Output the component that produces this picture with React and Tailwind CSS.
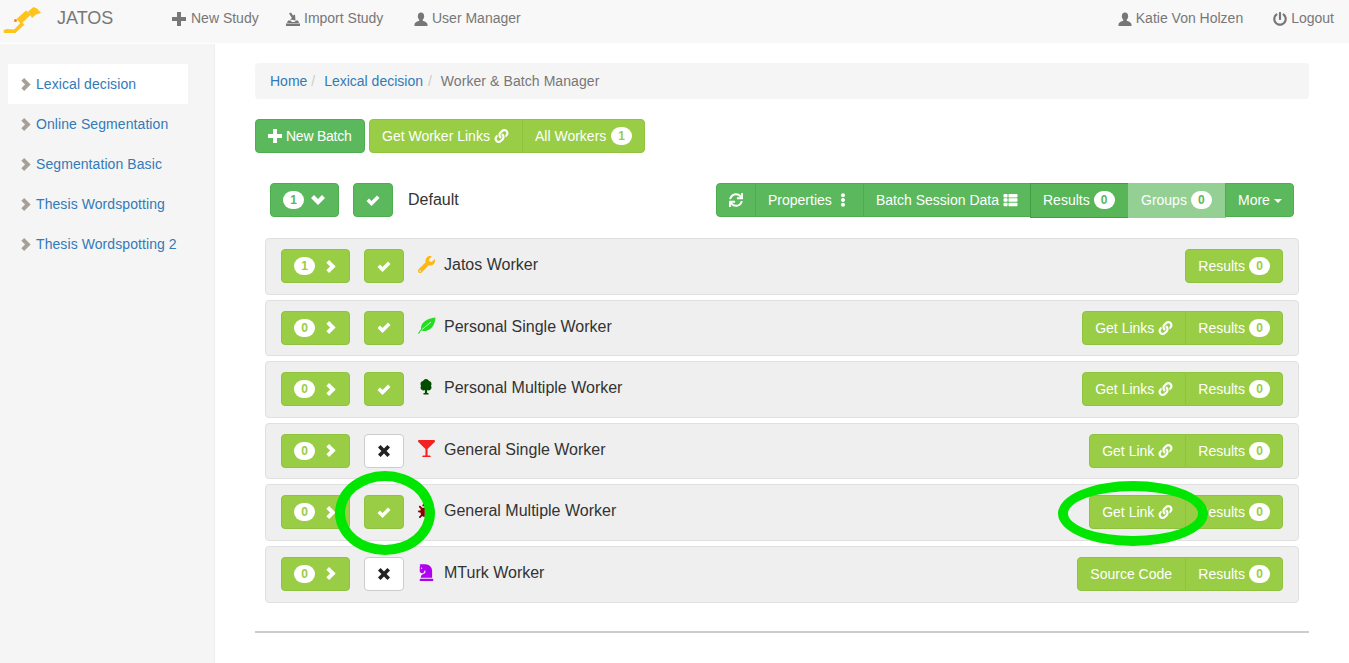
import { FaBug, FaChessKnight, FaEllipsisV, FaGlassMartini, FaLink, FaPowerOff, FaSync, FaThList, FaWrench } from 'react-icons/fa';

const Poly = ({ box, points, className }) => (
  <svg viewBox={box} className={className} fill="currentColor">
    <polygon points={points} />
  </svg>
);

const ChevronRight = ({ className }) => <Poly box="0 0 10 14" points="3,0 10,7 3,14 0,11 4,7 0,3" className={className} />;
const ChevronDown = ({ className }) => <Poly box="0 0 14 10" points="0,3 3,0 7,4 11,0 14,3 7,10" className={className} />;
const Check = ({ className }) => <Poly box="0 0 14 12" points="0.5,6.500 3,4 5.500,6.500 11,1 13.500,3.500 5.500,11.500" className={className} />;
const Cross = ({ className }) => <Poly box="0 0 14 14" points="3,0 7,4 11,0 14,3 10,7 14,11 11,14 7,10 3,14 0,11 4,7 0,3" className={className} />;
const Plus = ({ className }) => <Poly box="0 0 14 14" points="5,0 9,0 9,5 14,5 14,9 9,9 9,14 5,14 5,9 0,9 0,5 5,5" className={className} />;

const UserIcon = ({ className }) => (
  <svg viewBox="0 0 14 14" className={className} fill="currentColor">
    <path d="M7 .5c2 0 3.2 1.600 3.200 3.700 0 1.500-.7 2.800-1.400 3.400v1.200c1.300.6 4.700 1.400 4.700 3.700V14H.5v-1.500c0-2.300 3.400-3.100 4.700-3.700V7.600C4.500 7 3.800 5.700 3.800 4.200 3.800 2.100 5 .5 7 .5z" />
  </svg>
);

const ImportIcon = ({ className }) => (
  <svg viewBox="0 0 14 14" className={className} fill="currentColor">
    <path d="M0 11.500h14V14H0zM2 8.500h2.500l1.500 1.500h2.500L10 8.500h2l1 2.500H1z" />
    <path d="M3 1.500 5 .5 7 3.500 9 2.500 9.500 8.500 4 7.500 6 6z" />
  </svg>
);

const TreeIcon = ({ className }) => (
  <svg viewBox="0 0 14 16" className={className} fill="currentColor">
    <path d="M7 0c1.600 0 2.600 1 2.900 2.100C11.500 2.300 12.500 3.500 12.500 5c0 .8-.2 1.300-.6 1.800.4.500.6 1.100.6 1.700 0 1.700-1.400 2.900-3 2.900-.5 0-1-.1-1.400-.4V14h1.400v1.500H4.500V14h1.400v-2.900c-.4.300-.9.400-1.400.4-1.600 0-3-1.200-3-2.900 0-.6.200-1.200.6-1.700C1.700 6.300 1.500 5.800 1.500 5c0-1.500 1-2.700 2.600-2.900C4.400 1 5.400 0 7 0z" />
  </svg>
);

const LeafIcon = ({ className }) => (
  <svg viewBox="0 0 18 18" className={className}>
    <path fill="#22dd22" d="M17.500.5C17 7 14 13.500 7 14c-2 .1-3.200-.3-3.800-.7L1 17 0 16.300 3 12C2.500 5.500 9 1.500 17.500.5z" />
    <path stroke="#c8f7c8" strokeWidth="1" fill="none" d="M4 12.500 13 5" />
  </svg>
);

const Logo = () => (
  <svg viewBox="0 0 42 35" className="h-[35px] w-[42px] text-[#fdc41c]" fill="currentColor">
    <path d="M3.500 30 7 29 14 29.500 21.500 22 24.500 24.500 15.500 33 4 33z" />
    <path d="M16.500 19 26 10.500 31 14.500 21 24z" />
    <path d="M28 11.500 33.500 7 37 8.500 41 13 36 14.500 32 18z" />
    <circle cx="15.500" cy="20.500" r="1.500" fill="#f08030" />
  </svg>
);

const Badge = ({ children, tone }) => (
  <span className={`inline-flex h-[18px] min-w-[21px] items-center justify-center rounded-[10px] bg-white px-[7px] text-[12px] leading-none font-bold ${tone === 'lime' ? 'text-[#99cd46]' : 'text-[#5cb85c]'}`}>
    {children}
  </span>
);

const Btn = ({ tone = 'lime', className = '', children }) => {
  const tones = {
    lime: 'h-[34px] border-[#8fc33f] bg-[#99cd46] text-white',
    green: 'h-[34px] border-[#4cae4c] bg-[#5cb85c] text-white',
    active: 'h-[35px] pb-px border-[#449d44] bg-[#58b658] text-white',
    disabled: 'h-[35px] pb-px border-[#94d094] bg-[#94d094] text-white',
    white: 'h-[34px] border-[#ccc] bg-white text-[#333]',
  };
  return (
    <div className={`flex shrink-0 items-center gap-[4px] self-start rounded-[4px] border px-3 text-[14px] leading-5 whitespace-nowrap ${tones[tone]} ${className}`}>
      {children}
    </div>
  );
};

const Group = ({ items, tone = 'lime' }) => (
  <div className="flex">
    {items.map((item, i) => (
      <Btn
        key={i}
        tone={item.tone || tone}
        className={`${i > 0 ? '-ml-px rounded-l-none' : ''} ${i < items.length - 1 ? 'rounded-r-none' : ''} ${item.className || ''}`}
      >
        {item.content}
      </Btn>
    ))}
  </div>
);

const linkIcon = <FaLink className="h-[14px] w-[15px]" />;

const workers = [
  { name: 'Jatos Worker', count: 1, on: true, icon: <FaWrench className="h-[17px] w-[17px] text-[#fdb813]" />, action: null },
  { name: 'Personal Single Worker', count: 0, on: true, icon: <LeafIcon className="h-[18px] w-[18px]" />, action: 'Get Links' },
  { name: 'Personal Multiple Worker', count: 0, on: true, icon: <TreeIcon className="ml-px h-[16px] w-[14px] text-[#004d00]" />, action: 'Get Links' },
  { name: 'General Single Worker', count: 0, on: false, icon: <FaGlassMartini className="h-[17px] w-[17px] text-[#f52222]" />, action: 'Get Link' },
  { name: 'General Multiple Worker', count: 0, on: true, icon: <FaBug className="h-[15px] w-[15px] text-[#8b0000]" />, action: 'Get Link', marked: true },
  { name: 'MTurk Worker', count: 0, on: false, icon: <FaChessKnight className="h-[18px] w-[17px] text-[#b000f0]" />, action: 'Source Code' },
];

const Row = ({ w }) => {
  const actions = [];
  if (w.action === 'Source Code') {
    actions.push({ className: 'w-[109px]', content: w.action });
  } else if (w.action) {
    actions.push({ content: <>{w.action} {linkIcon}</> });
  }
  actions.push({ content: <>Results <Badge tone="lime">0</Badge></> });

  return (
    <div className="relative flex h-[56.6px] items-start rounded-[4px] border border-[#e0e0e0] bg-[#efefef] pt-[10px] pr-[15px] pl-[15px]">
      <Btn className="w-[69px] gap-[11px]">
        <Badge tone="lime">{w.count}</Badge>
        <ChevronRight className="h-[13px] w-[10px]" />
      </Btn>
      <Btn tone={w.on ? 'lime' : 'white'} className="ml-[14px] w-[40px] justify-center px-0">
        {w.on ? <Check className="h-[13px] w-[15px]" /> : <Cross className="h-[12px] w-[12px] text-[#222]" />}
      </Btn>
      <div className="ml-[14px] flex h-[30px] w-[26px] items-center">{w.icon}</div>
      <div className="flex h-[32px] items-center text-[16px] text-[#333]">{w.name}</div>
      <div className="ml-auto">
        <Group items={actions} />
      </div>
      {w.marked && (
        <>
          <div className="absolute top-[-14px] left-[69px] z-10 h-[84px] w-[100px] rounded-[50%] border-[10px] border-[#00e600]" />
          <div className="absolute top-[-4px] right-[90px] z-10 h-[65px] w-[150px] rounded-[50%] border-[10px] border-[#00e600]" />
        </>
      )}
    </div>
  );
};

const studies = ['Lexical decision', 'Online Segmentation', 'Segmentation Basic', 'Thesis Wordspotting', 'Thesis Wordspotting 2'];

export default function App() {
  return (
    <div className="flex h-screen flex-col overflow-hidden bg-white font-['Liberation_Sans',Arial,sans-serif] text-[14px] text-[#333]">
      {/* Navbar */}
      <div className="flex h-[44px] shrink-0 items-center border-b border-white bg-[#f8f8f8] pr-[15px] pb-[6px] text-[#777]">
        <div className="w-[57px] self-start"><Logo /></div>
        <span className="w-[115px] text-[18px]">JATOS</span>
        <div className="flex w-[114px] items-center gap-[5px]"><Plus className="h-[14px] w-[14px]" />New Study</div>
        <div className="flex w-[128px] items-center gap-[4px]"><ImportIcon className="h-[14px] w-[14px]" />Import Study</div>
        <div className="flex items-center gap-[4px]"><UserIcon className="h-[14px] w-[14px]" />User Manager</div>
        <div className="ml-auto flex items-center gap-[4px]"><UserIcon className="h-[14px] w-[14px]" />Katie Von Holzen</div>
        <div className="ml-[30px] flex items-center gap-[4px]"><FaPowerOff className="h-[14px] w-[14px]" />Logout</div>
      </div>

      <div className="flex min-h-0 flex-1">
        {/* Sidebar */}
        <div className="w-[215px] shrink-0 border-r border-[#eee] bg-[#f5f5f5] pt-5 pl-2">
          {studies.map((s, i) => (
            <div key={s} className={`flex h-10 w-[180px] items-center gap-[5px] pl-[13px] tracking-[0.08px] text-[#337ab7] ${i === 0 ? 'bg-white' : ''}`}>
              <ChevronRight className="h-[13px] w-[10px] text-[#a89f97]" />
              {s}
            </div>
          ))}
        </div>

        {/* Main */}
        <div className="min-w-0 flex-1 px-10 pt-[19px]">
          <div className="flex h-9 items-center rounded-[4px] bg-[#f5f5f5] px-[15px]">
            <span className="text-[#337ab7]">Home</span>
            <span className="pr-[5px] pl-[4px] text-[#ccc]">/&nbsp;</span>
            <span className="text-[#337ab7]">Lexical decision</span>
            <span className="px-[5px] text-[#ccc]">/&nbsp;</span>
            <span className="tracking-[0.08px] text-[#777]">Worker &amp; Batch Manager</span>
          </div>

          <div className="mt-5 flex gap-1">
            <Btn tone="green" className="w-[110px] tracking-[-0.25px]"><Plus className="h-[14px] w-[14px]" />New Batch</Btn>
            <Group
              items={[
                { className: 'w-[154px]', content: <>Get Worker Links {linkIcon}</> },
                { className: 'w-[123px] justify-between', content: <>All Workers <Badge tone="lime">1</Badge></> },
              ]}
            />
          </div>

          {/* Batch header */}
          <div className="mt-[30px] flex items-start pr-[15px] pl-[15px]">
            <Btn tone="green" className="w-[69px] gap-[7px]">
              <Badge tone="green">1</Badge>
              <ChevronDown className="h-[10px] w-[14px]" />
            </Btn>
            <Btn tone="green" className="ml-[14px] w-[40px] justify-center px-0">
              <Check className="h-[13px] w-[15px]" />
            </Btn>
            <div className="ml-[15px] flex h-[34px] items-center text-[16px]">Default</div>
            <div className="ml-auto">
              <Group
                tone="green"
                items={[
                  { className: 'w-[40px] justify-center px-0', content: <FaSync className="h-[14px] w-[14px]" /> },
                  { className: 'w-[109px]', content: <>Properties <FaEllipsisV className="h-[14px] w-[14px]" /></> },
                  { className: 'w-[168px]', content: <>Batch Session Data <FaThList className="h-[14px] w-[15px]" /></> },
                  { className: 'w-[99px]', tone: 'active', content: <>Results <Badge tone="green">0</Badge></> },
                  { className: 'w-[98px]', tone: 'disabled', content: <>Groups <Badge tone="green">0</Badge></> },
                  { className: 'w-[69px]', content: <>More <span className="mt-[2px] h-0 w-0 border-x-[4px] border-t-[4px] border-x-transparent border-t-white" /></> },
                ]}
              />
            </div>
          </div>

          {/* Workers */}
          <div className="mt-[20px] mr-[10px] ml-[10px] flex flex-col gap-[5px]">
            {workers.map((w) => <Row key={w.name} w={w} />)}
          </div>

          <div className="mt-[28px] border-t-2 border-[#ccc]" />
        </div>
      </div>
    </div>
  );
}
